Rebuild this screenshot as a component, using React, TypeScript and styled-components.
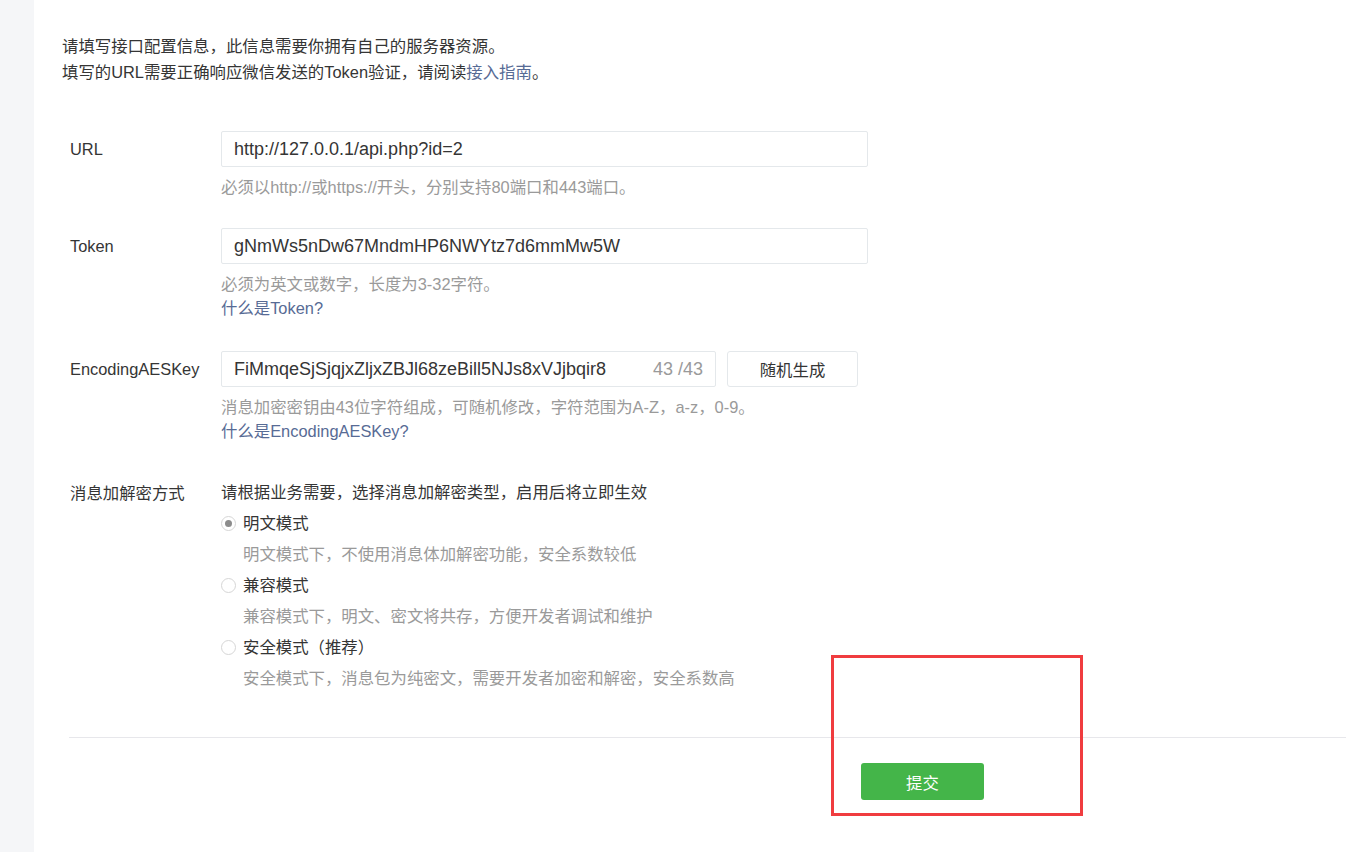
import styled, { createGlobalStyle } from "styled-components";

const GlobalStyle = createGlobalStyle`
  html, body {
    margin: 0;
    padding: 0;
    background: #ffffff;
  }
  body {
    font-family: "Liberation Sans", "Noto Sans CJK SC", sans-serif;
    color: #353535;
  }
`;

const Page = styled.div`
  display: flex;
  min-height: 852px;
  position: relative;
  overflow: hidden;
`;

const Sidebar = styled.div`
  width: 34px;
  flex-shrink: 0;
  background-color: #f5f6f8;
`;

const Panel = styled.div`
  flex: 1;
  background-color: #fff;
  padding-top: 33px;
`;

const Intro = styled.div`
  padding-left: 28px;
  font-size: 16.4px;
  line-height: 26px;
  color: #353535;
`;

const Link = styled.a`
  color: #576b95;
  text-decoration: none;
  cursor: pointer;
`;

const Form = styled.div`
  padding-left: 36px;
  margin-top: 46px;
`;

interface RowProps {
  gap?: number;
}

const FormRow = styled.div<RowProps>`
  display: flex;
  margin-top: ${(props) => props.gap ?? 30}px;
`;

interface LabelProps {
  top?: number;
}

const Label = styled.div<LabelProps>`
  width: 151px;
  flex-shrink: 0;
  font-size: 16.4px;
  line-height: 36px;
  color: #353535;
  margin-top: ${(props) => props.top ?? 0}px;
`;

const Field = styled.div`
  display: flex;
  flex-direction: column;
`;

const InputLine = styled.div`
  display: flex;
  gap: 11px;
`;

interface InputBoxProps {
  width: number;
}

const InputBox = styled.div<InputBoxProps>`
  width: ${(props) => props.width}px;
  height: 36px;
  box-sizing: border-box;
  border: 1px solid #e4e8eb;
  border-radius: 2px;
  display: flex;
  align-items: center;
  padding: 0 12px;
`;

const InputText = styled.span`
  flex: 1;
  font-size: 18px;
  color: #353535;
  white-space: nowrap;
`;

const Counter = styled.span`
  font-size: 18px;
  color: #9a9a9a;
`;

const GhostButton = styled.button`
  width: 131px;
  height: 36px;
  box-sizing: border-box;
  border: 1px solid #e4e8eb;
  border-radius: 3px;
  background: #fff;
  font-family: inherit;
  font-size: 16.4px;
  color: #353535;
  cursor: pointer;
`;

const Hints = styled.div`
  margin-top: 8px;
  font-size: 16.4px;
  line-height: 24px;
`;

const Hint = styled.div`
  color: #9a9a9a;
`;

const HintLink = styled(Link)`
  display: block;
`;

const ModeText = styled.div`
  font-size: 16.4px;
  line-height: 31px;
  color: #353535;
`;

const RadioRow = styled.label`
  display: flex;
  align-items: center;
  gap: 7px;
  font-size: 16.4px;
  line-height: 31px;
  color: #353535;
`;

interface RadioProps {
  checked?: boolean;
}

const RadioDot = styled.span<RadioProps>`
  width: 15px;
  height: 15px;
  box-sizing: border-box;
  border-radius: 50%;
  border: 1px solid #d6d6d6;
  display: flex;
  align-items: center;
  justify-content: center;
  &::after {
    content: "";
    width: 7px;
    height: 7px;
    border-radius: 50%;
    background: ${(props) => (props.checked ? "#8c8c8c" : "transparent")};
  }
`;

const ModeDesc = styled.div`
  padding-left: 22px;
  font-size: 16.4px;
  line-height: 31px;
  color: #9a9a9a;
`;

const Divider = styled.div`
  margin-top: 43px;
  margin-left: 35px;
  height: 1px;
  background-color: #e7e7eb;
`;

const Footer = styled.div`
  padding-left: 827px;
  padding-top: 25px;
`;

const SubmitButton = styled.button`
  width: 123px;
  height: 37px;
  border: none;
  border-radius: 3px;
  background-color: #44b549;
  color: #fff;
  font-family: inherit;
  font-size: 16.4px;
  cursor: pointer;
`;

// annotation drawn on top of the screenshot
const Highlight = styled.div`
  position: absolute;
  left: 831px;
  top: 655px;
  width: 252px;
  height: 161px;
  box-sizing: border-box;
  border: 3px solid #f03c3f;
  pointer-events: none;
`;

const modes = [
  { name: "明文模式", desc: "明文模式下，不使用消息体加解密功能，安全系数较低", checked: true },
  { name: "兼容模式", desc: "兼容模式下，明文、密文将共存，方便开发者调试和维护", checked: false },
  { name: "安全模式（推荐）", desc: "安全模式下，消息包为纯密文，需要开发者加密和解密，安全系数高", checked: false },
];

export default function App() {
  return (
    <Page>
      <GlobalStyle />
      <Sidebar />
      <Panel>
        <Intro>
          <div>请填写接口配置信息，此信息需要你拥有自己的服务器资源。</div>
          <div>
            填写的URL需要正确响应微信发送的Token验证，请阅读<Link>接入指南</Link>。
          </div>
        </Intro>

        <Form>
          <FormRow gap={0}>
            <Label>URL</Label>
            <Field>
              <InputBox width={647}>
                <InputText>http://127.0.0.1/api.php?id=2</InputText>
              </InputBox>
              <Hints>
                <Hint>必须以http://或https://开头，分别支持80端口和443端口。</Hint>
              </Hints>
            </Field>
          </FormRow>

          <FormRow gap={29}>
            <Label>Token</Label>
            <Field>
              <InputBox width={647}>
                <InputText>gNmWs5nDw67MndmHP6NWYtz7d6mmMw5W</InputText>
              </InputBox>
              <Hints>
                <Hint>必须为英文或数字，长度为3-32字符。</Hint>
                <HintLink>什么是Token?</HintLink>
              </Hints>
            </Field>
          </FormRow>

          <FormRow gap={31}>
            <Label>EncodingAESKey</Label>
            <Field>
              <InputLine>
                <InputBox width={495}>
                  <InputText>FiMmqeSjSjqjxZljxZBJl68zeBill5NJs8xVJjbqir8</InputText>
                  <Counter>43 /43</Counter>
                </InputBox>
                <GhostButton>随机生成</GhostButton>
              </InputLine>
              <Hints>
                <Hint>消息加密密钥由43位字符组成，可随机修改，字符范围为A-Z，a-z，0-9。</Hint>
                <HintLink>什么是EncodingAESKey?</HintLink>
              </Hints>
            </Field>
          </FormRow>

          <FormRow gap={34}>
            <Label top={-2}>消息加解密方式</Label>
            <Field>
              <ModeText>请根据业务需要，选择消息加解密类型，启用后将立即生效</ModeText>
              {modes.map((m) => (
                <div key={m.name}>
                  <RadioRow>
                    <RadioDot checked={m.checked} />
                    {m.name}
                  </RadioRow>
                  <ModeDesc>{m.desc}</ModeDesc>
                </div>
              ))}
            </Field>
          </FormRow>
        </Form>

        <Divider />
        <Footer>
          <SubmitButton>提交</SubmitButton>
        </Footer>
      </Panel>
      <Highlight />
    </Page>
  );
}
